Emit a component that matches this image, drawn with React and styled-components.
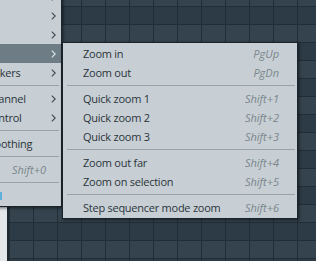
// Imports
import React from 'react';
import styled, { createGlobalStyle } from 'styled-components';

// Data
const parentItems = [
	{ label: 'Tools', arrow: true },
	{ label: 'Snap', arrow: true },
	{ label: 'View', arrow: true },
	{ label: 'Zoom', arrow: true, active: true },
	{ label: 'Time markers', arrow: true },
	{ sep: true },
	{ label: 'Target channel', arrow: true },
	{ label: 'Target control', arrow: true },
	{ sep: true },
	{ label: 'Note smoothing' },
	{ sep: true },
	{ label: 'Reset', shortcut: 'Shift+0' },
	{ sep: true },
	{ swatch: true },
];

const zoomItems = [
	{ label: 'Zoom in', shortcut: 'PgUp' },
	{ label: 'Zoom out', shortcut: 'PgDn' },
	{ sep: true },
	{ label: 'Quick zoom 1', shortcut: 'Shift+1' },
	{ label: 'Quick zoom 2', shortcut: 'Shift+2' },
	{ label: 'Quick zoom 3', shortcut: 'Shift+3' },
	{ sep: true },
	{ label: 'Zoom out far', shortcut: 'Shift+4' },
	{ label: 'Zoom on selection', shortcut: 'Shift+5' },
	{ sep: true },
	{ label: 'Step sequencer mode zoom', shortcut: 'Shift+6' },
];

// Chevron
const Chevron = ({ light }) => (
	<svg width="5" height="8" viewBox="0 0 5 8">
		<polyline points="0.8,0.6 4.2,4 0.8,7.4" fill="none" stroke={ light ? '#dde4e8' : '#3f4d56' } strokeWidth="1.15"/>
	</svg>
);

// Menu list
const MenuList = ({ items }) => items.map((item, i) => {
	if(item.sep) return <Separator key={ i }/>;
	return(
		<Item key={ i } $active={ item.active }>
			{ item.swatch ? <Swatch/> : <Label>{ item.label }</Label> }
			{ item.shortcut && <Shortcut>{ item.shortcut }</Shortcut> }
			<ArrowSlot>{ item.arrow && <Chevron light={ item.active }/> }</ArrowSlot>
		</Item>
	);
});

// Component
const App = () => {

	// Return
	return(
		<>
			<GlobalStyle/>
			<Screen>

				{/* Workspace */}
				<SidePanel/>
				<Grid/>
				{/* Workspace */}

				{/* Parent menu */}
				<ParentMenu>
					<MenuList items={ parentItems }/>
				</ParentMenu>
				{/* Parent menu */}

				{/* Zoom submenu */}
				<SubMenu>
					<MenuList items={ zoomItems }/>
				</SubMenu>
				{/* Zoom submenu */}

			</Screen>
		</>
	);

};

// Styled
const GlobalStyle = createGlobalStyle`
	body{
		margin: 0;
		background: #2b3a45;
		font-family: "Open Sans", "Noto Sans", sans-serif;
	}
`;

const Screen = styled.div`
	position: relative;
	width: 316px;
	height: 261px;
	overflow: hidden;
	display: flex;
`;

const SidePanel = styled.div`
	width: 7px;
	background: #e3e7e9;
	border-right: 2px solid #1d2830;
`;

const Grid = styled.div`
	flex: 1;
	background:
		linear-gradient(to right, #212e37 1px, transparent 1px) 0 0 / 24px 100%,
		linear-gradient(to bottom, #212e37 1px, transparent 1px) 0 6px / 100% 18px,
		linear-gradient(to bottom, #2c3b46 18px, #34434e 18px) 0 6px / 100% 36px;
`;

const Menu = styled.div`
	position: absolute;
	box-sizing: border-box;
	background: #c7cfd4;
	border: 1px solid #1b242a;
	box-shadow: 1px 1px 3px rgba(0, 0, 0, 0.55);
	padding: 1px 0;
	font-size: 11px;
	color: #2b353b;
	--pad-left: 20px;
	--pad-right: 8px;
`;

const ParentMenu = styled(Menu)`
	left: -100px;
	top: -15px;
	width: 162px;
	--pad-left: 52px;
	--pad-right: 5px;
`;

const SubMenu = styled(Menu)`
	left: 62px;
	top: 42px;
	width: 236px;
	z-index: 1;
`;

const Item = styled.div`
	display: flex;
	align-items: center;
	height: 19px;
	padding: 0 var(--pad-right) 0 var(--pad-left);
	background: ${ p => p.$active ? '#6d7c85' : 'transparent' };
	white-space: nowrap;
`;

const Label = styled.span`
	flex: 1;
	letter-spacing: -0.25px;
`;

const Shortcut = styled.span`
	font-style: italic;
	color: #7b868c;
`;

const ArrowSlot = styled.span`
	width: 10px;
	display: flex;
	justify-content: flex-end;
`;

const Swatch = styled.span`
	width: 10px;
	height: 8px;
	margin-left: 39px;
	background: #5fb0dd;
	flex: none;
	margin-right: auto;
`;

const Separator = styled.div`
	height: 1px;
	margin: 3px 2px 3px 4px;
	background: #9aa3a8;
`;

// Export
export default App;
